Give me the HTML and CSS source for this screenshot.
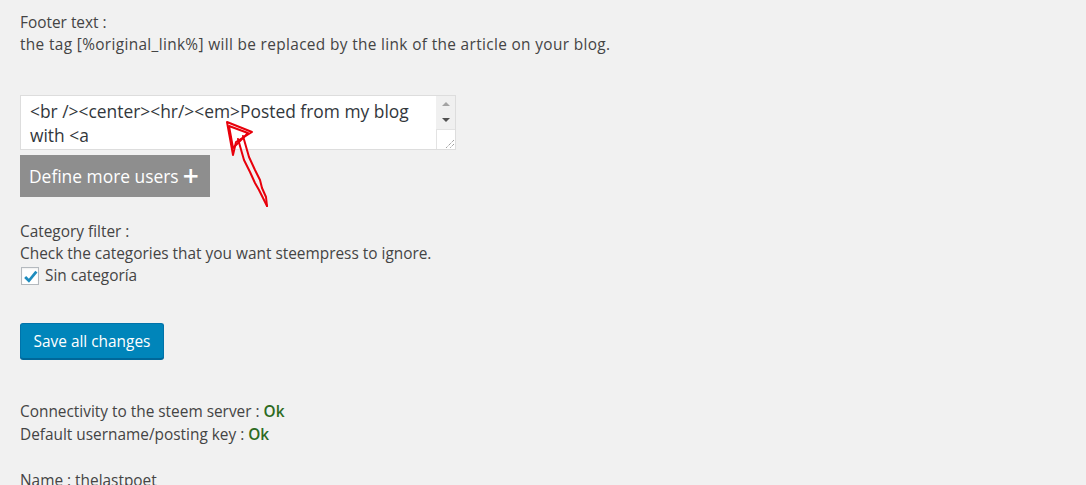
FILE: index.html
```html
<!DOCTYPE html>
<html>
<head>
<meta charset="utf-8">
<link rel="stylesheet" href="styles.css">
</head>
<body>
<div class="wrap">
  <p class="para">Footer text :<br><span class="wide">the tag [%original_link%] will be replaced by the link of the article on your blog.</span></p>

  <div class="ta">
    <div class="ta-text">&lt;br /&gt;&lt;center&gt;&lt;hr/&gt;&lt;em&gt;Posted from my blog<br>with &lt;a</div>
    <div class="ta-bar">
      <div class="ta-track">
        <span class="arr arr-up"></span>
        <span class="arr arr-down"></span>
      </div>
      <div class="ta-grip">
        <svg width="12" height="12" viewBox="0 0 12 12"><path d="M11 3 L3 11 M11 7 L7 11" stroke="#777" stroke-width="1" stroke-dasharray="1 1" fill="none"/></svg>
      </div>
    </div>
  </div>

  <button class="btn-gray">Define more users <span class="plus">+</span></button>

  <div class="para cat">
    Category filter :<br>
    Check the categories that you want steempress to ignore.<br>
    <label class="chk-row"><span class="chk"><svg width="15" height="15" viewBox="0 0 14 14"><path d="M2 7.5 L5.5 11 L12.5 2.5" stroke="#1e8cbe" stroke-width="2.6" fill="none" stroke-linejoin="miter"/></svg></span>Sin categoría</label>
  </div>

  <button class="btn-primary">Save all changes</button>

  <p class="para status">Connectivity to the steem server : <b class="ok">Ok</b><br>Default username/posting key : <b class="ok">Ok</b><br><br>Name : thelastpoet</p>
</div>

<svg class="annot" width="1086" height="485" viewBox="0 0 1086 485">
  <g stroke="#e8000b" stroke-width="2" fill="none" stroke-linejoin="round" stroke-linecap="round">
    <path d="M227 122 L233 155 L236 142 L252 132 Z"/>
    <path d="M229 126 L233 148 L248 133 Z"/>
    <path d="M238 139 L244 160 L250 172 L255 183 L259 190 L263 198 L267 206"/>
    <path d="M243 136 L249 157 L255 170 L260 180 L262 188 L266 197 L267 206"/>
  </g>
</svg>
</body>
</html>
```

FILE: styles.css
```css
html, body {
  margin: 0;
  padding: 0;
  background: #f1f1f1;
}
body {
  font-family: "Open Sans", "Noto Sans", "Liberation Sans", sans-serif;
  font-size: 15.4px;
  color: #444;
  position: relative;
  height: 485px;
  overflow: hidden;
}
.wrap {
  padding: 12px 20px 0 20px;
  display: flex;
  flex-direction: column;
  align-items: flex-start;
}
.para {
  margin: 0;
  line-height: 22px;
}
.wide {
  letter-spacing: 0.35px;
}
.ta {
  margin-top: 39px;
  width: 434px;
  height: 53px;
  border: 1px solid #ddd;
  background: #fff;
  display: flex;
}
.ta-text {
  flex: 1;
  padding: 3px 8px 0 9px;
  font-size: 17.4px;
  line-height: 24px;
  color: #32373c;
  overflow: hidden;
  white-space: nowrap;
}
.ta-bar {
  width: 19px;
  display: flex;
  flex-direction: column;
}
.ta-track {
  height: 33px;
  background: #f0f0f0;
  display: flex;
  flex-direction: column;
  align-items: center;
  justify-content: space-between;
  padding: 6px 0 7px;
  box-sizing: border-box;
}
.arr {
  width: 0;
  height: 0;
  border-left: 4px solid transparent;
  border-right: 4px solid transparent;
}
.arr-up { border-bottom: 4px solid #a3a3a3; }
.arr-down { border-top: 4px solid #505050; }
.ta-grip {
  flex: 1;
  border-left: 1px solid #e3e3e3;
  border-top: 1px solid #e3e3e3;
  background: #fff;
  display: flex;
  align-items: flex-end;
  justify-content: flex-end;
}
.btn-gray {
  margin-top: 5px;
  height: 42px;
  width: 190px;
  background: #8e8e8e;
  color: #fff;
  border: none;
  font-family: inherit;
  font-size: 17.4px;
  padding: 0 0 0 9px;
  text-align: left;
  display: flex;
  align-items: center;
  gap: 4px;
}
.plus {
  font-size: 28px;
  font-weight: 600;
  line-height: 1;
  margin-top: -3px;
}
.cat {
  margin-top: 24px;
}
.chk-row {
  display: flex;
  align-items: center;
  gap: 6px;
  padding-left: 1px;
  margin-top: 0;
}
.chk {
  width: 16px;
  height: 16px;
  border: 1px solid #b4b9be;
  background: #fff;
  display: flex;
  align-items: center;
  justify-content: center;
  box-shadow: inset 0 1px 2px rgba(0,0,0,0.07);
}
.btn-primary {
  margin-top: 36px;
  height: 36px;
  width: 144px;
  background: #0085ba;
  border: 1px solid #0073aa;
  border-bottom-color: #006799;
  border-radius: 3px;
  box-shadow: 0 1px 0 #006799;
  color: #fff;
  font-family: inherit;
  font-size: 15.4px;
  padding: 0;
}
.status {
  margin-top: 41px;
  line-height: 23px;
}
.ok {
  color: #2d6b1f;
  font-weight: 600;
}
.annot {
  position: absolute;
  left: 0;
  top: 0;
  pointer-events: none;
}
```
